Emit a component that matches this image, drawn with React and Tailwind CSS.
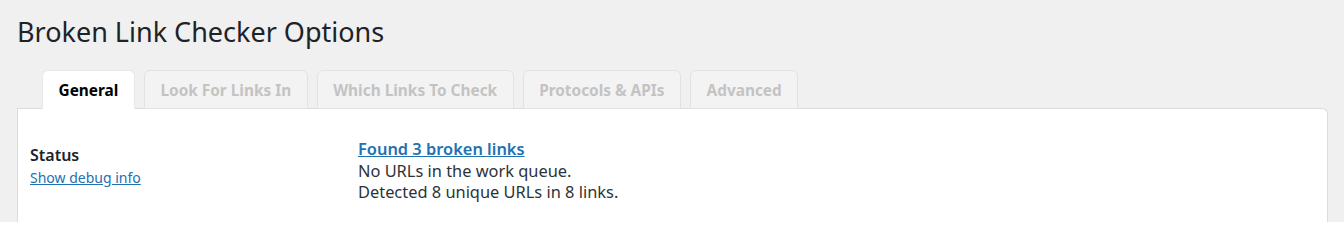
import React from "react";

const tabs = ["General", "Look For Links In", "Which Links To Check", "Protocols & APIs", "Advanced"];

const App = () => {
  return (
    <div className="h-[222px] overflow-hidden bg-[#f0f0f1] pl-[17px] pr-4 pt-[15px] font-['Noto_Sans',sans-serif] text-[#3c434a]">
      <h1 className="text-[27px] leading-[34px] font-normal text-[#1d2327]">Broken Link Checker Options</h1>

      <div className="mt-[21px] flex gap-[9px] pl-[25px]">
        {tabs.map((tab, i) => (
          <div
            key={tab}
            className={`-mb-px flex h-[39px] items-center rounded-t-[6px] border px-[15.5px] pt-[2px] text-[15.4px] font-bold ${
              i === 0
                ? "border-[#e8e8e8] border-b-white bg-white text-black"
                : "border-[#e2e2e2] bg-[#f3f3f3] text-[#c3c3c3]"
            }`}
          >
            {tab}
          </div>
        ))}
      </div>

      <div className="h-[120px] rounded-tr-[6px] border border-b-0 border-[#dcdcde] bg-white">
        <div className="flex pt-[29px]">
          <div className="w-[340px] pl-[12px]">
            <div className="mt-[7px] text-[16px] leading-[20px] font-semibold text-[#1d2327]">Status</div>
            <a href="#" className="text-[14px] leading-[20px] text-[#2271b1] underline">Show debug info</a>
          </div>
          <div className="text-[16.4px] leading-[21.5px] text-[#2c3338]">
            <a href="#" className="font-semibold text-[#2271b1] underline">Found 3 broken links</a>
            <div>No URLs in the work queue.</div>
            <div>Detected 8 unique URLs in 8 links.</div>
          </div>
        </div>
      </div>
    </div>
  );
};

export default App;
